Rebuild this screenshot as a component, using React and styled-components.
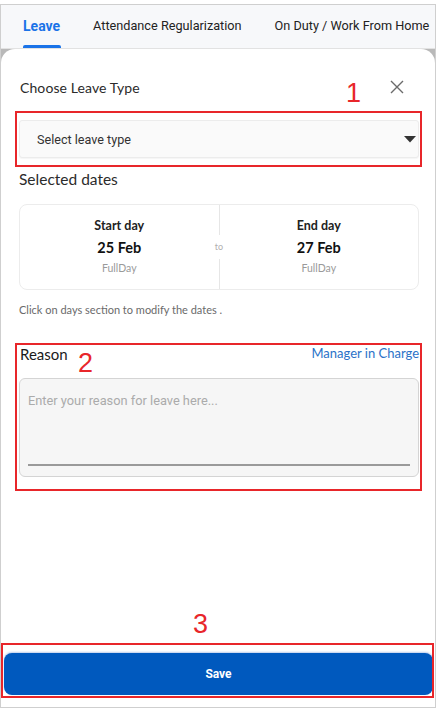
import React from "react";
import styled, { createGlobalStyle } from "styled-components";

const Global = createGlobalStyle`
  html, body { margin: 0; padding: 0; background: #ffffff; }
  * { box-sizing: border-box; }
`;

const Page = styled.div`
  position: relative;
  width: 436px;
  height: 709px;
  padding-top: 4px;
  background: #ffffff;
`;

const Frame = styled.div`
  width: 436px;
  height: 704px;
  border: 1px solid #cfcfcf;
  background: #b9b9b9;
  display: flex;
  flex-direction: column;
  overflow: hidden;
`;

const TabBar = styled.div`
  height: 44px;
  flex: none;
  background: #f7f8fa;
  display: flex;
  align-items: stretch;
  gap: 33px;
  padding-left: 22px;
  border-bottom: 1px solid #e2e2e2;
  white-space: nowrap;
`;

const Tab = styled.div`
  position: relative;
  display: flex;
  align-items: center;
  padding-bottom: 2px;
  font-family: Roboto, "Liberation Sans", sans-serif;
  font-size: ${(p) => (p.$active ? "14px" : "12.7px")};
  font-weight: ${(p) => (p.$active ? 700 : 400)};
  color: ${(p) => (p.$active ? "#1a73e8" : "#222222")};
  &::after {
    content: "";
    display: ${(p) => (p.$active ? "block" : "none")};
    position: absolute;
    left: 0;
    right: -1px;
    bottom: 0;
    height: 3px;
    border-radius: 2px 2px 0 0;
    background: #1a73e8;
  }
`;

const Sheet = styled.div`
  flex: 1;
  background: #ffffff;
  border-radius: 14px 14px 0 0;
  display: flex;
  flex-direction: column;
  padding: 0 16px 12px 18px;
`;

const Header = styled.div`
  margin-top: 27px;
  height: 22px;
  display: flex;
  align-items: center;
  justify-content: space-between;
  padding-right: 15px;
  padding-left: 1px;
`;

const Title = styled.div`
  font-family: Lato, "Open Sans", sans-serif;
  font-size: 14px;
  font-weight: 400;
  color: #2b2b2b;
  letter-spacing: 0.1px;
`;

const CloseBtn = styled.div`
  width: 14px;
  height: 14px;
  display: flex;
`;

const Select = styled.div`
  margin-top: 22px;
  height: 38px;
  border: 1px solid #ececec;
  border-radius: 3px;
  background: #fafafa;
  box-shadow: 0 1px 1px rgba(0, 0, 0, 0.04);
  display: flex;
  align-items: center;
  justify-content: space-between;
  padding: 0 2px 0 17px;
  font-family: Roboto, "Liberation Sans", sans-serif;
  font-size: 12.6px;
  color: #333333;
`;

const SectionTitle = styled.div`
  margin-top: 11px;
  height: 20px;
  line-height: 20px;
  font-family: Lato, "Open Sans", sans-serif;
  font-size: 15.5px;
  color: #2b2b2b;
`;

const DatesCard = styled.div`
  margin-top: 15px;
  height: 86px;
  border: 1px solid #ececec;
  border-radius: 8px;
  display: flex;
`;

const DayCol = styled.div`
  flex: 1;
  display: flex;
  flex-direction: column;
  align-items: center;
  padding-top: 12px;
  font-family: Lato, "Open Sans", sans-serif;
`;

const DayLabel = styled.div`
  font-size: 12.5px;
  font-weight: 700;
  color: #222222;
  line-height: 18px;
`;

const DayDate = styled.div`
  margin-top: 3px;
  font-size: 14.5px;
  font-weight: 700;
  color: #111111;
  line-height: 20px;
`;

const DayType = styled.div`
  margin-top: 3px;
  font-size: 10.5px;
  color: #9a9a9a;
  line-height: 14px;
`;

const Divider = styled.div`
  width: 1px;
  display: flex;
  flex-direction: column;
  align-items: center;
  justify-content: space-between;
`;

const DivLine = styled.div`
  width: 1px;
  height: 30px;
  background: #e6e6e6;
`;

const ToText = styled.div`
  font-family: Lato, "Open Sans", sans-serif;
  font-size: 9px;
  color: #b0b0b0;
  line-height: 12px;
`;

const Hint = styled.div`
  margin-top: 13px;
  line-height: 14px;
  font-family: Lato, "Open Sans", sans-serif;
  font-size: 11px;
  color: #6a6a6a;
`;

const ReasonRow = styled.div`
  margin-top: 27px;
  height: 20px;
  display: flex;
  align-items: flex-start;
  justify-content: space-between;
  padding-left: 1px;
`;

const ReasonLabel = styled.div`
  font-family: Lato, "Open Sans", sans-serif;
  font-size: 15px;
  color: #1a1a1a;
  line-height: 20px;
`;

const Link = styled.div`
  font-family: Lato, "Open Sans", sans-serif;
  font-size: 13px;
  color: #2a72c8;
  line-height: 18px;
`;

const TextArea = styled.div`
  margin-top: 14px;
  height: 99px;
  border: 1px solid #d4d4d4;
  border-radius: 6px;
  background: #f6f6f6;
  padding: 13px 8px 0 8px;
  display: flex;
  flex-direction: column;
  justify-content: space-between;
`;

const Placeholder = styled.div`
  font-family: Roboto, "Liberation Sans", sans-serif;
  font-size: 12.8px;
  color: #ababab;
  line-height: 18px;
`;

const Underline = styled.div`
  height: 2px;
  background: #9a9a9a;
  margin-bottom: 10px;
`;

const Spacer = styled.div`
  flex: 1;
`;

const SaveButton = styled.button`
  margin-left: -15px;
  margin-right: -14px;
  height: 42px;
  border: none;
  border-radius: 8px;
  background: #0059be;
  color: #ffffff;
  font-family: Roboto, "Liberation Sans", sans-serif;
  font-size: 12px;
  font-weight: 700;
  box-shadow: 0 -1px 2px rgba(60, 110, 200, 0.35);
`;

const Annot = styled.div`
  position: absolute;
  left: ${(p) => p.$x}px;
  top: ${(p) => p.$y}px;
  width: ${(p) => p.$w}px;
  height: ${(p) => p.$h}px;
  border: 2px solid #e8262a;
  pointer-events: none;
`;

const Num = styled.div`
  position: absolute;
  left: ${(p) => p.$x}px;
  top: ${(p) => p.$y}px;
  font-family: "Liberation Sans", Arial, sans-serif;
  font-size: 27px;
  line-height: 27px;
  color: #e8262a;
`;

export default function App() {
  return (
    <Page>
      <Global />
      <Frame>
        <TabBar>
          <Tab $active>Leave</Tab>
          <Tab>Attendance Regularization</Tab>
          <Tab>On Duty / Work From Home</Tab>
        </TabBar>
        <Sheet>
          <Header>
            <Title>Choose Leave Type</Title>
            <CloseBtn>
              <svg width="14" height="14" viewBox="0 0 14 14">
                <path d="M1 1 L13 13 M13 1 L1 13" stroke="#6b6b6b" strokeWidth="1.4" />
              </svg>
            </CloseBtn>
          </Header>
          <Select>
            <span>Select leave type</span>
            <svg width="12" height="7" viewBox="0 0 12 7">
              <path d="M0 0 L12 0 L6 6.5 Z" fill="#333333" />
            </svg>
          </Select>
          <SectionTitle>Selected dates</SectionTitle>
          <DatesCard>
            <DayCol>
              <DayLabel>Start day</DayLabel>
              <DayDate>25 Feb</DayDate>
              <DayType>FullDay</DayType>
            </DayCol>
            <Divider>
              <DivLine />
              <ToText>to</ToText>
              <DivLine />
            </Divider>
            <DayCol>
              <DayLabel>End day</DayLabel>
              <DayDate>27 Feb</DayDate>
              <DayType>FullDay</DayType>
            </DayCol>
          </DatesCard>
          <Hint>Click on days section to modify the dates .</Hint>
          <ReasonRow>
            <ReasonLabel>Reason</ReasonLabel>
            <Link>Manager in Charge</Link>
          </ReasonRow>
          <TextArea>
            <Placeholder>Enter your reason for leave here...</Placeholder>
            <Underline />
          </TextArea>
          <Spacer />
          <SaveButton>Save</SaveButton>
        </Sheet>
      </Frame>
      <Annot $x={15} $y={111} $w={407} $h={56} />
      <Annot $x={15} $y={343} $w={407} $h={148} />
      <Annot $x={1} $y={643} $w={433} $h={55} />
      <Num $x={346} $y={80}>1</Num>
      <Num $x={78} $y={350}>2</Num>
      <Num $x={193} $y={611}>3</Num>
    </Page>
  );
}
